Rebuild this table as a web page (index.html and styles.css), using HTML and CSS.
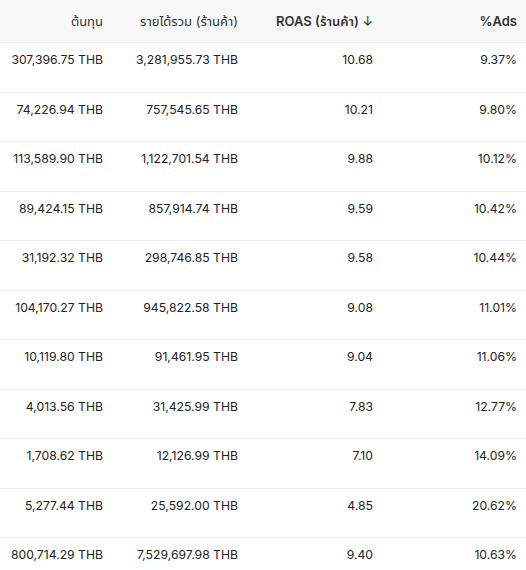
FILE: index.html
```html
<!DOCTYPE html>
<html lang="th">
<head>
    <meta charset="UTF-8">
    <meta name="viewport" content="width=device-width, initial-scale=1.0">
    <title>ROAS ร้านค้า</title>
    <link rel="stylesheet" href="styles.css">
</head>
<body>
    <div class="report">
        <div class="row head">
            <div class="cell">ต้นทุน</div>
            <div class="cell">รายได้รวม (ร้านค้า)</div>
            <div class="cell strong">ROAS (ร้านค้า) <span class="arrow">↓</span></div>
            <div class="cell strong">%Ads</div>
        </div>
        <div class="row">
            <div class="cell">307,396.75 THB</div>
            <div class="cell">3,281,955.73 THB</div>
            <div class="cell">10.68</div>
            <div class="cell">9.37%</div>
        </div>
        <div class="row">
            <div class="cell">74,226.94 THB</div>
            <div class="cell">757,545.65 THB</div>
            <div class="cell">10.21</div>
            <div class="cell">9.80%</div>
        </div>
        <div class="row">
            <div class="cell">113,589.90 THB</div>
            <div class="cell">1,122,701.54 THB</div>
            <div class="cell">9.88</div>
            <div class="cell">10.12%</div>
        </div>
        <div class="row">
            <div class="cell">89,424.15 THB</div>
            <div class="cell">857,914.74 THB</div>
            <div class="cell">9.59</div>
            <div class="cell">10.42%</div>
        </div>
        <div class="row">
            <div class="cell">31,192.32 THB</div>
            <div class="cell">298,746.85 THB</div>
            <div class="cell">9.58</div>
            <div class="cell">10.44%</div>
        </div>
        <div class="row">
            <div class="cell">104,170.27 THB</div>
            <div class="cell">945,822.58 THB</div>
            <div class="cell">9.08</div>
            <div class="cell">11.01%</div>
        </div>
        <div class="row">
            <div class="cell">10,119.80 THB</div>
            <div class="cell">91,461.95 THB</div>
            <div class="cell">9.04</div>
            <div class="cell">11.06%</div>
        </div>
        <div class="row">
            <div class="cell">4,013.56 THB</div>
            <div class="cell">31,425.99 THB</div>
            <div class="cell">7.83</div>
            <div class="cell">12.77%</div>
        </div>
        <div class="row">
            <div class="cell">1,708.62 THB</div>
            <div class="cell">12,126.99 THB</div>
            <div class="cell">7.10</div>
            <div class="cell">14.09%</div>
        </div>
        <div class="row">
            <div class="cell">5,277.44 THB</div>
            <div class="cell">25,592.00 THB</div>
            <div class="cell">4.85</div>
            <div class="cell">20.62%</div>
        </div>
        <div class="row total">
            <div class="cell">800,714.29 THB</div>
            <div class="cell">7,529,697.98 THB</div>
            <div class="cell">9.40</div>
            <div class="cell">10.63%</div>
        </div>
    </div>
</body>
</html>
```

FILE: styles.css
```css
body {
    font-family: Inter, "Noto Sans Thai", "Noto Sans", sans-serif;
    margin: 0;
    padding: 0;
    background: #ffffff;
    color: #222;
    overflow: hidden;
}

.report {
    width: 526px;
}

.row {
    display: grid;
    grid-template-columns: 112px 135px 135px 144px;
    height: 49.5px;
    border-top: 1px solid #ececec;
    box-sizing: border-box;
    font-size: 12.2px;
}

.row.head {
    height: 42px;
    border-top: none;
    background: #f8f8f8;
    align-items: center;
    font-size: 13px;
    color: #333;
}

.cell {
    text-align: right;
    padding: 0 9px;
    line-height: 20px;
    white-space: nowrap;
}

.row:not(.head) .cell {
    padding-top: 7px;
}

.strong {
    font-weight: 600;
}

.arrow {
    font-weight: 400;
}
```
